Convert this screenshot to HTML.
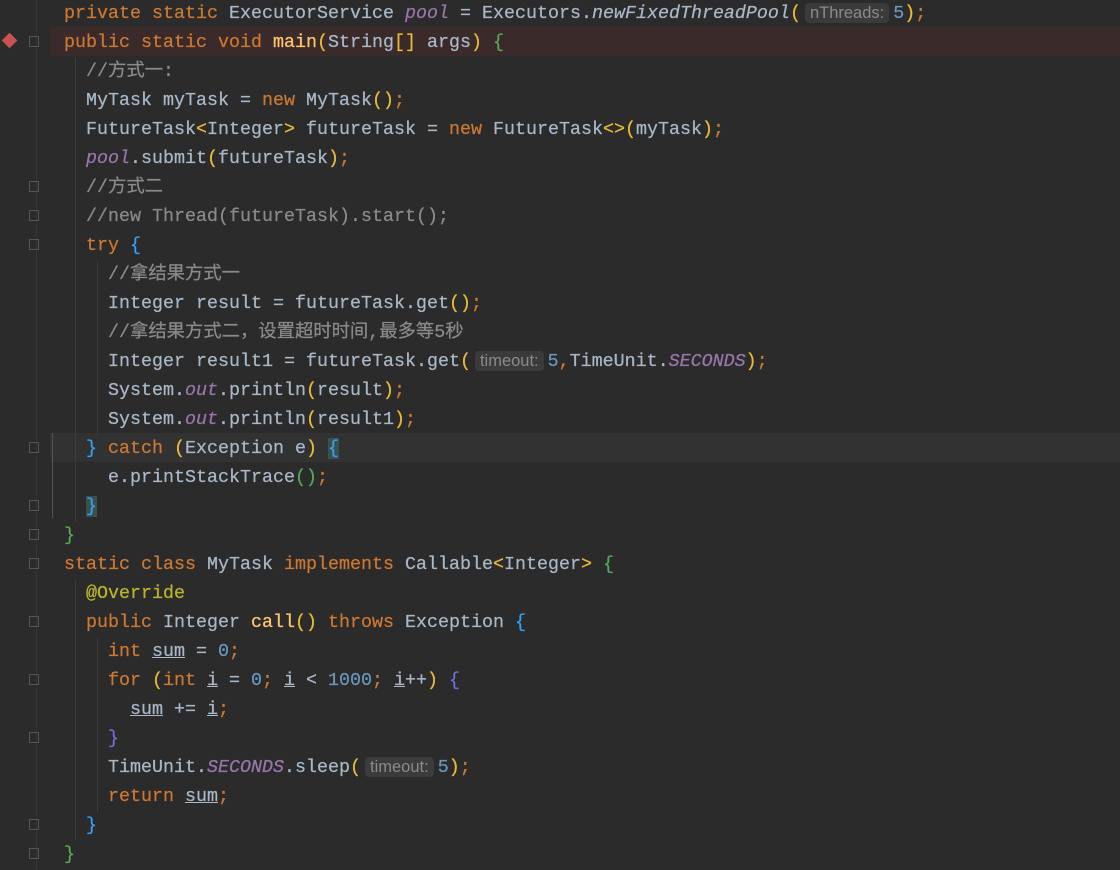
<!DOCTYPE html>
<html><head><meta charset="utf-8"><style>
html,body{margin:0;padding:0;background:#2b2b2b;width:1120px;height:870px;overflow:hidden}
.l{position:absolute;left:64px;height:29px;line-height:29px;white-space:pre;font-family:"Liberation Mono","Noto Sans CJK SC",monospace;font-size:18.33px;color:#a9b7c6;-webkit-text-stroke:0.25px}
.k{color:#cc7832}.c{color:#8a8a8a}.n{color:#6897bb}.f{color:#9876aa;font-style:italic}.i{font-style:italic}.m{color:#ffc66d}.a{color:#bbb529}
.y{color:#e8ba36}.g{color:#54a857}.b{color:#359ff4}.p{color:#6e6ed8}.u{text-decoration:underline}
.h{font-family:"Liberation Sans",sans-serif;font-size:16.5px;color:#8a8a8a;background:#3b3b3b;border-radius:4px;padding:1px 5px;margin:0 4px;-webkit-text-stroke:0}
.bg{position:absolute;left:50px;right:0;height:29px}
.fold{position:absolute;left:29px;width:10px;height:11px;border:1px solid #555;box-sizing:border-box}
.gd{position:absolute;width:1px;background:#3c3c3c}
</style></head><body>
<div class="bg" style="top:27px;background:#3a2a2a"></div>
<div class="bg" style="top:433px;background:#323232"></div>
<div style="position:absolute;left:4px;top:35px;width:11px;height:11px;background:#c75450;transform:rotate(45deg)"></div>
<div class="gd" style="left:36px;top:0;height:870px;background:#353535"></div>
<div class="gd" style="left:75px;top:58px;height:464px"></div>
<div class="gd" style="left:97px;top:261px;height:174px"></div>
<div class="gd" style="left:75px;top:580px;height:260px"></div>
<div class="gd" style="left:97px;top:638px;height:174px"></div>
<div class="gd" style="left:52px;top:433px;height:85px;background:#555"></div>
<div class="fold" style="top:36px"></div><div class="fold" style="top:181px"></div><div class="fold" style="top:210px"></div><div class="fold" style="top:239px"></div><div class="fold" style="top:442px"></div><div class="fold" style="top:500px"></div><div class="fold" style="top:529px"></div><div class="fold" style="top:558px"></div><div class="fold" style="top:616px"></div><div class="fold" style="top:674px"></div><div class="fold" style="top:732px"></div><div class="fold" style="top:819px"></div><div class="fold" style="top:848px"></div>
<div class="l" style="top:-1px"><span class="k">private static </span>ExecutorService <span class="f">pool</span> = Executors.<span class="i">newFixedThreadPool</span><span class="y">(</span><span class="h">nThreads:</span><span class="n">5</span><span class="y">)</span><span class="k">;</span></div>
<div class="l" style="top:28px"><span class="k">public static void </span><span class="m">main</span><span class="y">(</span>String<span class="y">[]</span> args<span class="y">)</span> <span class="g">{</span></div>
<div class="l c" style="top:57px">  //方式一:</div>
<div class="l" style="top:86px">  MyTask myTask = <span class="k">new </span>MyTask<span class="y">()</span><span class="k">;</span></div>
<div class="l" style="top:115px">  FutureTask<span class="y">&lt;</span>Integer<span class="y">&gt;</span> futureTask = <span class="k">new </span>FutureTask<span class="y">&lt;&gt;(</span>myTask<span class="y">)</span><span class="k">;</span></div>
<div class="l" style="top:144px">  <span class="f">pool</span>.submit<span class="y">(</span>futureTask<span class="y">)</span><span class="k">;</span></div>
<div class="l c" style="top:173px">  //方式二</div>
<div class="l c" style="top:202px">  //new Thread(futureTask).start();</div>
<div class="l" style="top:231px">  <span class="k">try </span><span class="b">{</span></div>
<div class="l c" style="top:260px">    //拿结果方式一</div>
<div class="l" style="top:289px">    Integer result = futureTask.get<span class="y">()</span><span class="k">;</span></div>
<div class="l c" style="top:318px">    //拿结果方式二，设置超时时间,最多等5秒</div>
<div class="l" style="top:347px">    Integer result1 = futureTask.get<span class="y">(</span><span class="h">timeout:</span><span class="n">5</span><span class="k">,</span>TimeUnit.<span class="f">SECONDS</span><span class="y">)</span><span class="k">;</span></div>
<div class="l" style="top:376px">    System.<span class="f">out</span>.println<span class="y">(</span>result<span class="y">)</span><span class="k">;</span></div>
<div class="l" style="top:405px">    System.<span class="f">out</span>.println<span class="y">(</span>result1<span class="y">)</span><span class="k">;</span></div>
<div class="l" style="top:434px">  <span class="b">}</span> <span class="k">catch </span><span class="y">(</span>Exception e<span class="y">)</span> <span class="b" style="background:#3b514d">{</span></div>
<div class="l" style="top:463px">    e.printStackTrace<span class="g">()</span><span class="k">;</span></div>
<div class="l" style="top:492px">  <span class="b" style="background:#3b514d">}</span></div>
<div class="l" style="top:521px"><span class="g">}</span></div>
<div class="l" style="top:550px"><span class="k">static class </span>MyTask <span class="k">implements </span>Callable<span class="y">&lt;</span>Integer<span class="y">&gt;</span> <span class="g">{</span></div>
<div class="l a" style="top:579px">  @Override</div>
<div class="l" style="top:608px">  <span class="k">public </span>Integer <span class="m">call</span><span class="y">()</span> <span class="k">throws </span>Exception <span class="b">{</span></div>
<div class="l" style="top:637px">    <span class="k">int </span><span class="u">sum</span> = <span class="n">0</span><span class="k">;</span></div>
<div class="l" style="top:666px">    <span class="k">for </span><span class="y">(</span><span class="k">int </span><span class="u">i</span> = <span class="n">0</span><span class="k">; </span><span class="u">i</span> &lt; <span class="n">1000</span><span class="k">; </span><span class="u">i</span>++<span class="y">)</span> <span class="p">{</span></div>
<div class="l" style="top:695px">      <span class="u">sum</span> += <span class="u">i</span><span class="k">;</span></div>
<div class="l" style="top:724px">    <span class="p">}</span></div>
<div class="l" style="top:753px">    TimeUnit.<span class="f">SECONDS</span>.sleep<span class="y">(</span><span class="h">timeout:</span><span class="n">5</span><span class="y">)</span><span class="k">;</span></div>
<div class="l" style="top:782px">    <span class="k">return </span><span class="u">sum</span><span class="k">;</span></div>
<div class="l" style="top:811px">  <span class="b">}</span></div>
<div class="l" style="top:840px"><span class="g">}</span></div>
</body></html>
